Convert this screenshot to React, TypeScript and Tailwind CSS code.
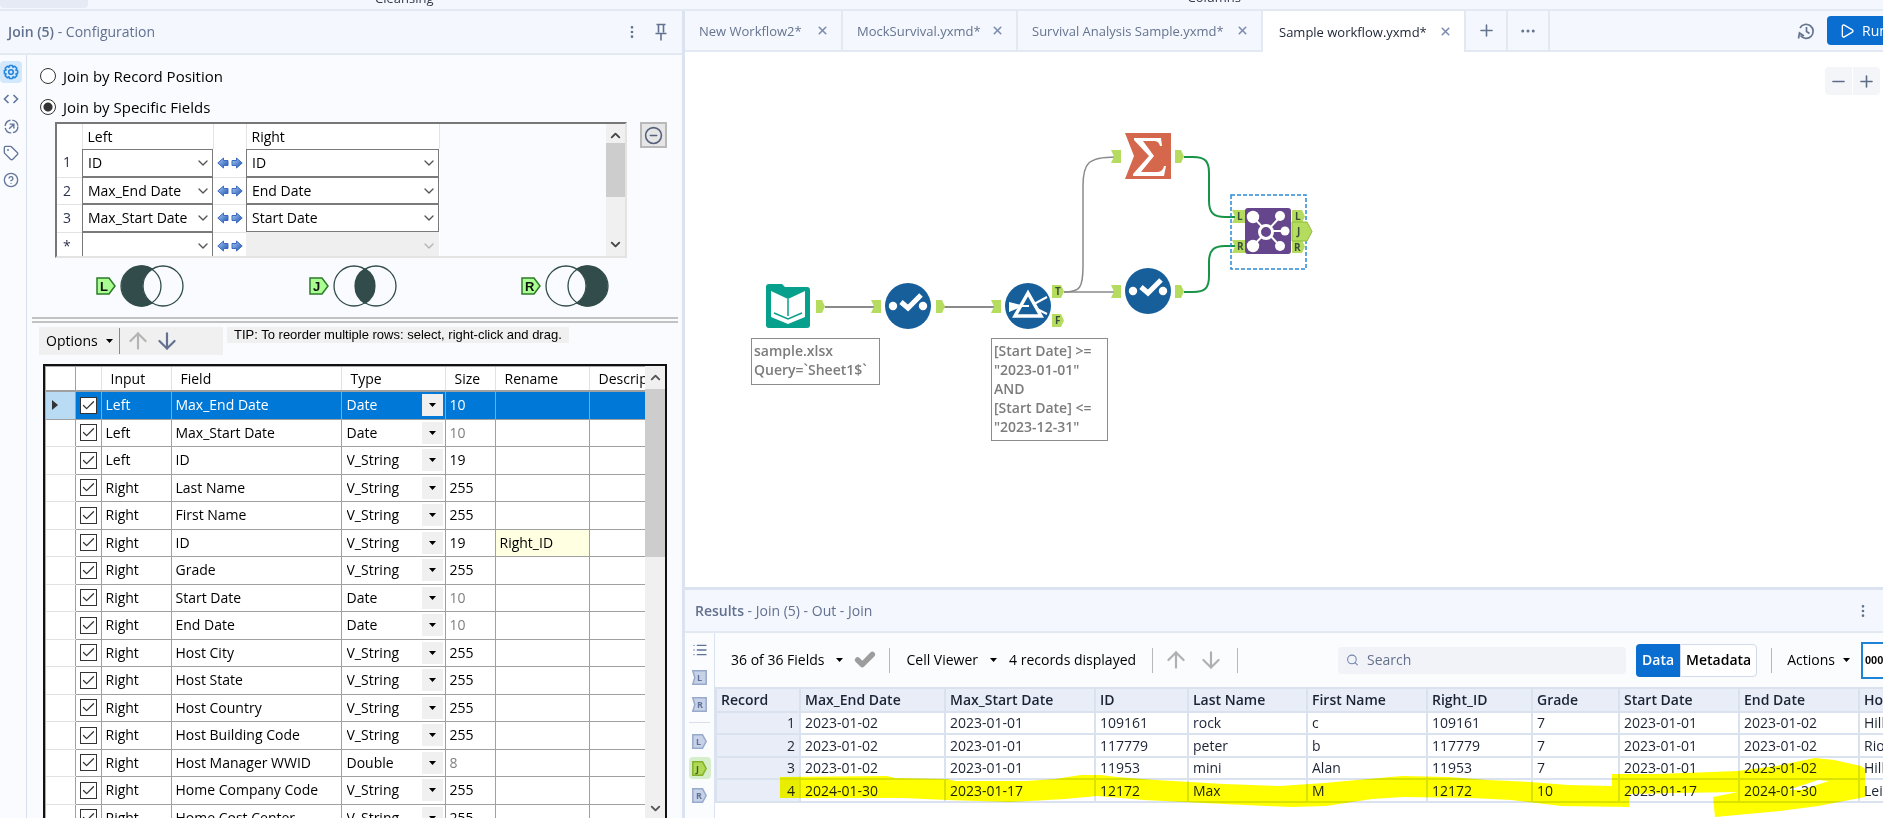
import React from 'react';
import {
  ArrowDown,
  ArrowUp,
  Check,
  ChevronDown,
  ChevronUp,
  CircleHelp,
  CircleMinus,
  EllipsisVertical,
  Ellipsis,
  List,
  Minus,
  Pin,
  Play,
  Plus,
  Search,
  Tag,
  X
} from 'lucide-react';

const joinRows = [
  { label: '1', left: 'ID', right: 'ID' },
  { label: '2', left: 'Max_End Date', right: 'End Date' },
  { label: '3', left: 'Max_Start Date', right: 'Start Date' },
  { label: '*', left: '', right: '' }
];

const fieldRows = [
  { input: 'Left', field: 'Max_End Date', type: 'Date', size: '10' },
  { input: 'Left', field: 'Max_Start Date', type: 'Date', size: '10' },
  { input: 'Left', field: 'ID', type: 'V_String', size: '19' },
  { input: 'Right', field: 'Last Name', type: 'V_String', size: '255' },
  { input: 'Right', field: 'First Name', type: 'V_String', size: '255' },
  { input: 'Right', field: 'ID', type: 'V_String', size: '19', rename: 'Right_ID' },
  { input: 'Right', field: 'Grade', type: 'V_String', size: '255' },
  { input: 'Right', field: 'Start Date', type: 'Date', size: '10' },
  { input: 'Right', field: 'End Date', type: 'Date', size: '10' },
  { input: 'Right', field: 'Host City', type: 'V_String', size: '255' },
  { input: 'Right', field: 'Host State', type: 'V_String', size: '255' },
  { input: 'Right', field: 'Host Country', type: 'V_String', size: '255' },
  { input: 'Right', field: 'Host Building Code', type: 'V_String', size: '255' },
  { input: 'Right', field: 'Host Manager WWID', type: 'Double', size: '8' },
  { input: 'Right', field: 'Home Company Code', type: 'V_String', size: '255' },
  { input: 'Right', field: 'Home Cost Center', type: 'V_String', size: '255' }
];

const tabs = [
  { name: 'New Workflow2*', width: 'w-[158px]' },
  { name: 'MockSurvival.yxmd*', width: 'w-[175px]' },
  { name: 'Survival Analysis Sample.yxmd*', width: 'w-[245px]' },
  { name: 'Sample workflow.yxmd*', width: 'w-[203px]', active: true }
];

const resultColumns = [
  'Record', 'Max_End Date', 'Max_Start Date', 'ID', 'Last Name', 'First Name',
  'Right_ID', 'Grade', 'Start Date', 'End Date', 'Host City'
];

const resultRows = [
  ['1', '2023-01-02', '2023-01-01', '109161', 'rock', 'c', '109161', '7', '2023-01-01', '2023-01-02', 'Hillsboro'],
  ['2', '2023-01-02', '2023-01-01', '117779', 'peter', 'b', '117779', '7', '2023-01-01', '2023-01-02', 'Rio Rancho'],
  ['3', '2023-01-02', '2023-01-01', '11953', 'mini', 'Alan', '11953', '7', '2023-01-01', '2023-01-02', 'Hillsboro'],
  ['4', '2024-01-30', '2023-01-17', '12172', 'Max', 'M', '12172', '10', '2023-01-17', '2024-01-30', 'Leixlip']
];

function Caret() {
  return (
    <svg viewBox="0 0 7 4" className="h-1 w-[7px] shrink-0" fill="currentColor" aria-hidden="true">
      <path d="M0 0h7L3.500 4z" />
    </svg>
  );
}

function SwapArrows() {
  return (
    <svg viewBox="0 0 26 12" className="mx-auto h-3 w-[26px]" aria-hidden="true">
      <defs>
        <linearGradient id="swap" x1="0" y1="0" x2="1" y2="1">
          <stop offset="0" stopColor="#a9cdf8" />
          <stop offset="1" stopColor="#1d4fae" />
        </linearGradient>
      </defs>
      <g fill="url(#swap)" stroke="#3c6cc0" strokeWidth="1">
        <path d="M.8 6l5.700-5v2.500h4.500v5H6.500V11z" />
        <path d="M25.200 6l-5.700-5v2.500h-4.500v5h4.500V11z" />
      </g>
    </svg>
  );
}

function TopStrip() {
  return (
    <div className="flex h-[11px] shrink-0 items-end overflow-hidden border-b-2 border-[#e3e9f3] bg-[#f4f7fd] text-[13px] leading-4 text-[#333a4a]">
      <div className="h-2 w-[88px] shrink-0 self-start rounded-b bg-[#e6eaf4]" />
      <span className="ml-[287px] pb-[3px]">Cleansing</span>
      <span className="ml-[754px] pb-1">Columns</span>
    </div>
  );
}

function SideRail() {
  const item = 'flex h-[22px] w-[22px] items-center justify-center rounded text-[#62759a]';
  return (
    <nav className="flex w-[27px] shrink-0 flex-col gap-[5px] border-r border-[#d9e1ef] pt-[6px]">
      <button className="flex h-[22px] w-[22px] items-center justify-center rounded bg-[#d3e8fc] text-[#2486dc]" aria-label="Configuration">
        <svg viewBox="0 0 16 16" className="h-4 w-4" fill="none" stroke="currentColor" strokeWidth="1.600" strokeLinejoin="round">
          <path d="M6.500 1.500h3l.5 1.700 1.800-.9 2 2-.9 1.800 1.700.5v2.800l-1.700.5.9 1.800-2 2-1.800-.9-.5 1.700h-3l-.5-1.700-1.800.9-2-2 .9-1.800-1.700-.5V6.600l1.700-.5-.9-1.800 2-2 1.800.9z" />
          <circle cx="8" cy="8" r="2.300" />
        </svg>
      </button>
      <button className={item} aria-label="XML view">
        <svg viewBox="0 0 16 16" className="h-4 w-4" fill="none" stroke="currentColor" strokeWidth="1.600">
          <path d="M5.500 4l-4 4 4 4M10.500 4l4 4-4 4" />
        </svg>
      </button>
      <button className={item} aria-label="Navigation">
        <svg viewBox="0 0 16 16" className="h-[15px] w-[15px]" fill="none" stroke="currentColor" strokeWidth="1.500">
          <circle cx="8" cy="8" r="6.800" strokeDasharray="8.700 2" />
          <path d="M5.500 10.500l5-5M6 5.500h4.500V10" />
        </svg>
      </button>
      <button className={item} aria-label="Annotation"><Tag size={16} /></button>
      <button className={item} aria-label="Help"><CircleHelp size={16} /></button>
    </nav>
  );
}

function JoinSelect({ value, disabled = false, name }: { value: string; disabled?: boolean; name: string }) {
  return (
    <div className="grid h-full w-full items-center">
      <select
        aria-label={name}
        disabled={disabled}
        defaultValue={value}
        className="col-start-1 row-start-1 h-full w-full appearance-none border border-[#7a7a7a] bg-white pl-[5px] text-black disabled:border-[#efefef] disabled:bg-[#efefef]">
        <option>{value}</option>
      </select>
      <ChevronDown
        size={16}
        strokeWidth={2}
        className={disabled ? 'pointer-events-none col-start-1 row-start-1 mr-[2px] justify-self-end text-[#b5b5b5]' : 'pointer-events-none col-start-1 row-start-1 mr-[2px] justify-self-end text-[#555]'} />
    </div>
  );
}

function JoinGrid() {
  return (
    <div className="flex h-[136px] w-[572px] overflow-hidden border-2 border-[#e3e3e3] border-t-[#777] border-l-[#777]">
      <div className="flex-1 overflow-hidden">
        <table className="w-[382px] table-fixed border-collapse bg-white">
          <colgroup>
            <col className="w-[25px]" />
            <col className="w-[131px]" />
            <col className="w-[33px]" />
            <col className="w-[193px]" />
          </colgroup>
          <thead>
            <tr className="h-[25px] text-left">
              <th />
              <th className="border-l border-[#e3e3e3] pl-[5px] font-normal">Left</th>
              <th className="border-l border-[#e3e3e3]" />
              <th className="border-x border-[#e3e3e3] pl-[5px] font-normal">Right</th>
            </tr>
          </thead>
          <tbody>
            {joinRows.map((row) => (
              <tr key={row.label} className="odd:h-7 even:h-[27px]">
                <td className="border-b border-[#e3e3e3] pl-[6px] pt-[3px] align-top text-[#2b3350]">{row.label}</td>
                <td className="h-px p-0"><JoinSelect value={row.left} name={`Left field ${row.label}`} /></td>
                <td className="border-b border-[#e3e3e3] p-0"><SwapArrows /></td>
                <td className="h-px p-0"><JoinSelect value={row.right} name={`Right field ${row.label}`} disabled={!row.right} /></td>
              </tr>
            ))}
          </tbody>
        </table>
      </div>
      <div className="flex w-[19px] flex-col items-center justify-between bg-[#f0f0f0] py-1 text-[#444]">
        <ChevronUp size={15} strokeWidth={3} />
        <div className="mb-auto h-[54px] w-full bg-[#cdcdcd]" />
        <ChevronDown size={15} strokeWidth={3} />
      </div>
    </div>
  );
}

function Venn({ kind }: { kind: 'L' | 'J' | 'R' }) {
  return (
    <div className="flex items-center gap-1">
      <svg viewBox="0 0 20 18" className="h-[18px] w-5">
        <path d="M1 1h12l6 8-6 8H1z" fill="#a9ff8f" stroke="#2c7a2c" strokeWidth="1.500" />
        <text x="4" y="14" className="font-[Liberation_Sans] text-[13px] font-bold" fill="#111">{kind}</text>
      </svg>
      <svg viewBox="0 0 64 42" className="h-[42px] w-16" stroke="#314c4b" strokeWidth="1.300" fill="none">
        {kind === 'L' && <path d="M32 3.700a20 20 0 1 0 0 34.600a20 20 0 0 1 0-34.600z" fill="#314c4b" />}
        {kind === 'J' && <path d="M32 3.700a20 20 0 0 1 0 34.600a20 20 0 0 1 0-34.600z" fill="#314c4b" />}
        {kind === 'R' && <path d="M32 3.700a20 20 0 1 1 0 34.600a20 20 0 0 0 0-34.600z" fill="#314c4b" />}
        <circle cx="21" cy="21" r="20" />
        <circle cx="43" cy="21" r="20" />
      </svg>
    </div>
  );
}

function FieldTable() {
  return (
    <div className="ml-4 mr-[15px] flex min-h-0 flex-1 overflow-hidden border-x-2 border-t-2 border-[#111] bg-white">
      <div className="min-w-0 flex-1 overflow-hidden border-l border-t border-[#aaa]">
        <table className="w-[640px] table-fixed border-collapse">
          <colgroup>
            <col className="w-[29px]" />
            <col className="w-[26px]" />
            <col className="w-[70px]" />
            <col className="w-[170px]" />
            <col className="w-[104px]" />
            <col className="w-[50px]" />
            <col className="w-[94px]" />
            <col className="w-[97px]" />
          </colgroup>
          <thead>
            <tr className="h-6 border-b-2 border-[#a0a0a0] text-left">
              <th className="border-r border-[#a0a0a0]" />
              <th className="border-r border-[#e2e2e2]" />
              {['Input', 'Field', 'Type', 'Size', 'Rename', 'Description'].map((name) => (
                <th key={name} className="border-r border-[#e2e2e2] pl-[9px] font-normal">{name}</th>
              ))}
            </tr>
          </thead>
          <tbody>
            {fieldRows.map((row, i) => {
              const selected = i === 0;
              const fixed = row.type !== 'V_String' && !selected;
              return (
                <tr key={i} className={selected ? 'h-7 bg-[#0078d7] text-white' : 'odd:h-7 even:h-[27px]'}>
                  <td className={selected ? 'border-b border-r border-[#a0a0a0] bg-[#b9dcf4] p-0' : 'border-b border-r border-b-[#e2e2e2] border-r-[#a0a0a0] p-0'}>
                    {selected && (
                      <svg viewBox="0 0 6 10" className="ml-[6px] h-[10px] w-[6px]" fill="#333"><path d="M0 0l6 5-6 5z" /></svg>
                    )}
                  </td>
                  <td className="border border-[#a0a0a0] p-0">
                    <label className="mx-auto grid h-[17px] w-[17px] place-items-center">
                      <input
                        type="checkbox"
                        defaultChecked
                        aria-label={`Include ${row.input} ${row.field}`}
                        className="col-start-1 row-start-1 h-[17px] w-[17px] appearance-none border border-[#333] bg-white" />
                      <Check size={15} strokeWidth={2} className="pointer-events-none col-start-1 row-start-1 text-[#333]" />
                    </label>
                  </td>
                  <td className="border border-[#a0a0a0] pl-1">{row.input}</td>
                  <td className="border border-[#a0a0a0] pl-1">{row.field}</td>
                  <td className="h-px border border-[#a0a0a0] p-0">
                    <div className="grid h-full grid-cols-[1fr_23px] items-center">
                      <select
                        aria-label={`Type of ${row.field}`}
                        defaultValue={row.type}
                        className="col-span-2 col-start-1 row-start-1 w-full appearance-none bg-transparent pl-[5px]">
                        <option>{row.type}</option>
                      </select>
                      <span className="pointer-events-none col-start-2 row-start-1 mr-[2px] flex h-[22px] items-center justify-center bg-[#f0f0f0] text-black">
                        <Caret />
                      </span>
                    </div>
                  </td>
                  <td className={fixed ? 'border border-[#a0a0a0] pl-1 text-[#808080]' : 'border border-[#a0a0a0] pl-1'}>{row.size}</td>
                  <td className={row.rename ? 'border border-[#a0a0a0] bg-[#ffffe1] pl-1' : 'border border-[#a0a0a0] pl-1'}>{row.rename}</td>
                  <td className="border border-[#a0a0a0]" />
                </tr>
              );
            })}
          </tbody>
        </table>
      </div>
      <div className="flex w-5 flex-col items-center bg-[#f0f0f0] text-[#555]">
        <ChevronUp size={15} strokeWidth={3} className="my-1" />
        <div className="h-[168px] w-full bg-[#cdcdcd]" />
        <ChevronDown size={15} strokeWidth={3} className="mt-auto mb-[2px]" />
      </div>
    </div>
  );
}

function ConfigPanel() {
  return (
    <aside className="flex w-[685px] shrink-0 flex-col border-r-[3px] border-[#dbe3f0] bg-[#fafbfe]">
      <header className="flex h-[44px] shrink-0 items-center border-b-2 border-[#e3e9f3] bg-[#f4f7fd] pl-2 pr-[14px] text-[#62718f]">
        <h2><b className="font-semibold">Join (5)</b> - Configuration</h2>
        <button className="ml-auto" aria-label="More"><EllipsisVertical size={16} /></button>
        <button className="ml-[14px]" aria-label="Pin">
          <svg viewBox="0 0 14 18" className="h-[18px] w-[14px]" fill="none" stroke="currentColor" strokeWidth="1.600">
            <path d="M2.500 1.500h9M4.500 1.500v8M9.500 1.500v8M1.500 10.500h11M7 10.500v7" />
          </svg>
        </button>
      </header>
      <div className="flex min-h-0 flex-1">
        <SideRail />
        <div className="flex min-w-0 flex-1 flex-col text-black">
          <div className="flex flex-col gap-[11px] pl-[13px] pt-[11px] text-[15px]">
            {['Join by Record Position', 'Join by Specific Fields'].map((name, i) => (
              <label key={name} className="flex h-5 items-center gap-[7px]">
                <input
                  type="radio"
                  name="join-by"
                  defaultChecked={i === 1}
                  className="h-4 w-4 appearance-none rounded-full border border-[#333] bg-white checked:bg-[radial-gradient(circle,#333_4px,#fff_5px)]" />
                {name}
              </label>
            ))}
          </div>
          <div className="mt-[5px] flex items-start gap-[13px] pl-7">
            <JoinGrid />
            <button className="flex h-[26px] w-[27px] items-center justify-center border-2 border-[#b9b9b9] bg-[#e6e6e6] text-[#55617d]" aria-label="Remove field">
              <CircleMinus size={19} strokeWidth={2} />
            </button>
          </div>
          <div className="mt-[7px] flex justify-between pl-[69px] pr-[73px]">
            <Venn kind="L" />
            <Venn kind="J" />
            <Venn kind="R" />
          </div>
          <div className="ml-[5px] mr-1 mt-[10px] h-[6px] shrink-0 border-y-2 border-[#c2c2c2]" />
          <div className="mt-1 flex gap-1 pl-3">
            <div className="flex h-7 w-[184px] items-center bg-[#f0f0f0] pl-[7px]">
              <button className="flex items-center gap-2">Options <Caret /></button>
              <span className="ml-[6px] h-[26px] w-px bg-[#888]" />
              <button className="ml-[5px] text-[#b4b4b4]" aria-label="Move up"><ArrowUp size={26} /></button>
              <button className="ml-[3px] text-[#62718f]" aria-label="Move down"><ArrowDown size={26} /></button>
            </div>
            <p className="h-4 bg-[#f0f0f0] px-[7px] font-['Liberation_Sans'] text-[13px] leading-4">
              TIP: To reorder multiple rows: select, right-click and drag.
            </p>
          </div>
          <div className="h-[9px] shrink-0" />
          <FieldTable />
        </div>
      </div>
    </aside>
  );
}

function TabBar() {
  return (
    <div className="flex h-[41px] shrink-0 bg-[#f4f7fd] text-[#65748f]">
      {tabs.map(({ name, width, active }) => (
        <div
          key={name}
          className={
            active
              ? `${width} flex shrink-0 items-center justify-between whitespace-nowrap border-r-2 border-[#e3e9f3] bg-white pl-4 pr-3 text-[13px] text-[#1c2434]`
              : `${width} flex shrink-0 items-center justify-between whitespace-nowrap border-b-2 border-r-2 border-[#e3e9f3] pl-[14px] pr-3 text-[13px]`
          }>
          <button>{name}</button>
          <button className="text-[#7d8db0]" aria-label={`Close ${name}`}><X size={13} strokeWidth={3} /></button>
        </div>
      ))}
      <button className="flex w-[42px] shrink-0 items-center justify-center border-b-2 border-r-2 border-[#e3e9f3]" aria-label="New tab">
        <Plus size={19} />
      </button>
      <button className="flex w-[42px] shrink-0 items-center justify-center border-b-2 border-r-2 border-[#e3e9f3]" aria-label="More tabs">
        <Ellipsis size={18} />
      </button>
      <div className="flex flex-1 items-center justify-end gap-3 border-b-2 border-[#e3e9f3]">
        <button aria-label="History">
          <svg viewBox="0 0 18 18" className="h-[18px] w-[18px]" fill="none" stroke="currentColor" strokeWidth="1.700">
            <path d="M3 6a7 7 0 1 1 .5 7.500M9.500 5v4.500l3 2" />
            <path d="M1.500 16.500L2.500 11l4.500 3" />
          </svg>
        </button>
        <button className="flex h-[29px] w-14 items-center gap-[7px] overflow-hidden rounded-l bg-[#0a6ed1] pl-3 text-white">
          <Play size={16} className="shrink-0" />
          Run
        </button>
      </div>
    </div>
  );
}

// Input anchors have a notch on the left, output anchors a point on the right
function AnchorIn({ x, y }: { x: number; y: number }) {
  return <path d={`M${x} ${y}h10v13h-10l3-6.500z`} fill="#b5dc5f" />;
}

function AnchorOut({ x, y, w = 9, h = 13 }: { x: number; y: number; w?: number; h?: number }) {
  return <path d={`M${x} ${y}h${w - 3}l3 ${h / 2}l-3 ${h / 2}h-${w - 3}z`} fill="#b5dc5f" />;
}

function SelectTool({ x, y }: { x: number; y: number }) {
  return (
    <g transform={`translate(${x} ${y})`}>
      <circle r="23" fill="#175f9b" />
      <g fill="#fff">
        <circle cx="-15" r="4.200" />
        <circle cx="15" r="4.200" />
      </g>
      <path d="M-7-4L0 2L13-11" fill="none" stroke="#fff" strokeWidth="5" />
    </g>
  );
}

function AnchorLabel({ x, y, children }: { x: number; y: number; children: string }) {
  return <text x={x} y={y} fill="#3a4f3a" className="text-[10px] font-bold">{children}</text>;
}

function Canvas() {
  const note = 'absolute border border-[#8c8c8c] bg-white pl-[2px] pt-[2px] text-[14px] leading-[19px] font-semibold text-[#7c7c7c]';
  return (
    <div className="relative min-h-0 flex-1 overflow-hidden bg-white">
      <svg viewBox="0 0 660 420" className="absolute left-0 top-0 h-[420px] w-[660px]">
        <g fill="none" stroke="#8a8a8a" strokeWidth="1.500">
          <path d="M140 255h52M259 255h53" strokeWidth="2" />
          <path d="M379 240h52" />
          <path d="M379 240c16 0 19-4 19-26V134c0-22 4-29 33-29" />
          <path d="M499 105h9c12 0 16 4 16 16v28c0 12 5 16 16 16h12" stroke="#179447" strokeWidth="2" />
          <path d="M499 240h9c12 0 16-4 16-16v-14c0-12 5-16 16-16h12" stroke="#179447" strokeWidth="2" />
        </g>

        {/* Input Data */}
        <path d="M81 235a3 3 0 0 1 3-3h13l3 3h22a3 3 0 0 1 3 3v35a3 3 0 0 1-3 3H84a3 3 0 0 1-3-3z" fill="#07a08c" />
        <path d="M86 239l17 8 17-8v26l-17 7-17-7z" fill="#fff" />
        <path d="M103 247v17M89 261l14 6 14-6" fill="none" stroke="#07a08c" strokeWidth="1.500" />
        <AnchorOut x={131} y={248} />

        <AnchorIn x={186} y={248} />
        <SelectTool x={223} y={254} />
        <AnchorOut x={251} y={248} />

        {/* Filter */}
        <AnchorIn x={306} y={248} />
        <circle cx="343" cy="254" r="23" fill="#175f9b" />
        <path d="M324 250l12 3v2l-12 5z" fill="#fff" />
        <path d="M343 241l13 23h-26z" fill="none" stroke="#fff" strokeWidth="3.500" />
        <path d="M349 252l13-7M352 257l10 5M336 254h8" stroke="#fff" strokeWidth="2" />
        <AnchorOut x={367} y={233} w={12} />
        <AnchorOut x={367} y={262} w={12} />
        <AnchorLabel x={370} y={243}>T</AnchorLabel>
        <AnchorLabel x={370} y={272}>F</AnchorLabel>

        {/* Summarize */}
        <AnchorIn x={426} y={98} />
        <path d="M440 81h46v46h-46l9-23z" fill="#d4674c" />
        <path d="M449 86h27l1 8h-2c-1-4-3-5-7-5h-10l11 15-13 16h15c5 0 7-2 8-6h2l-2 10h-31v-2l16-18-15-16z" fill="#fff" />
        <AnchorOut x={490} y={98} />

        <AnchorIn x={426} y={233} />
        <SelectTool x={463} y={239} />
        <AnchorOut x={490} y={233} />

        {/* Join, currently selected */}
        <rect x="546" y="143" width="75" height="74" fill="none" stroke="#2b8ad6" strokeWidth="1.500" strokeDasharray="4 2" />
        <path d="M547 158h13v13h-13l3-6.500zM547 188h13v13h-13l3-6.500z" fill="#b5dc5f" />
        <path d="M546 165h4M546 194h4" stroke="#179447" strokeWidth="2" />
        <rect x="560" y="156" width="46" height="46" rx="3" fill="#65468d" />
        <g stroke="#fff" strokeWidth="2">
          <path d="M568 165l27 29M568 194l27-29M581 179h18" />
          <circle cx="581" cy="180" r="6.500" fill="#65468d" strokeWidth="3" />
        </g>
        <g fill="#fff">
          <circle cx="568" cy="165" r="6.200" />
          <circle cx="568" cy="194" r="6.200" />
          <circle cx="595" cy="164" r="5" />
          <circle cx="595" cy="194" r="5" />
          <circle cx="600" cy="179" r="4.500" />
        </g>
        <AnchorOut x={607} y={158} w={13} />
        <AnchorOut x={607} y={188} w={13} />
        <path d="M607 170h15l5 9.500-5 9.500h-15z" fill="#b5dc5f" stroke="#8dbb3c" />
        <AnchorLabel x={552} y={168}>L</AnchorLabel>
        <AnchorLabel x={552} y={198}>R</AnchorLabel>
        <AnchorLabel x={610} y={168}>L</AnchorLabel>
        <AnchorLabel x={612} y={183}>J</AnchorLabel>
        <AnchorLabel x={609} y={199}>R</AnchorLabel>
      </svg>
      <div className={`${note} left-[66px] top-[286px] h-[47px] w-[129px]`}>
        sample.xlsx<br />Query=`Sheet1$`
      </div>
      <div className={`${note} left-[306px] top-[286px] h-[103px] w-[117px]`}>
        [Start Date] &gt;=<br />"2023-01-01"<br />AND<br />[Start Date] &lt;=<br />"2023-12-31"
      </div>
      <div className="absolute right-[3px] top-[15px] flex gap-px text-[#5e6c87]">
        <button className="flex h-7 w-[27px] items-center justify-center rounded-l bg-[#f3f5f9]" aria-label="Zoom out"><Minus size={19} /></button>
        <button className="flex h-7 w-[27px] items-center justify-center rounded-r bg-[#f3f5f9]" aria-label="Zoom in"><Plus size={19} /></button>
      </div>
    </div>
  );
}

function RailAnchor({ letter, input = false, active = false }: { letter: string; input?: boolean; active?: boolean }) {
  return (
    <button
      aria-label={`${input ? 'Input' : 'Output'} ${letter}`}
      className={active ? 'flex h-[22px] w-[22px] shrink-0 items-center justify-center rounded bg-[#d6eecb]' : 'flex h-[22px] w-[22px] shrink-0 items-center justify-center rounded'}>
      <svg viewBox="0 0 15 15" className="h-[15px] w-[15px]">
        <path
          d={input ? 'M.8.8h13.400v13.400H.8l2-6.700z' : 'M.8.8h9.700l3.700 6.700-3.700 6.700H.8z'}
          fill={active ? '#b0d957' : '#c7d2e8'}
          stroke={active ? '#86b02c' : '#98a9cb'}
          strokeWidth="1.500" />
        <text x={input ? 5 : 4} y="11" fill={active ? '#3f5a2a' : '#5f7197'} className="text-[9px] font-bold">{letter}</text>
      </svg>
    </button>
  );
}

function ResultsToolbar() {
  const divider = 'h-[25px] w-px shrink-0 bg-[#b8b8b8]';
  return (
    <div className="flex h-[54px] shrink-0 items-center whitespace-nowrap bg-[#fbfcfe] pl-4 text-black">
      <button className="flex items-center gap-3">36 of 36 Fields <Caret /></button>
      <button className="ml-[11px] text-[#9d9d9d]" aria-label="Apply"><Check size={22} strokeWidth={6} /></button>
      <span className={`ml-[13px] ${divider}`} />
      <button className="ml-4 flex items-center gap-3">Cell Viewer <Caret /></button>
      <span className="ml-3">4 records displayed</span>
      <span className={`ml-4 ${divider}`} />
      <button className="ml-[10px] text-[#b0b0b0]" aria-label="Previous"><ArrowUp size={26} /></button>
      <button className="ml-[9px] text-[#b0b0b0]" aria-label="Next"><ArrowDown size={26} /></button>
      <span className={`ml-[13px] ${divider}`} />
      <label className="ml-auto flex h-[27px] w-[288px] items-center gap-2 rounded bg-[#f1f3f9] pl-2 text-[#7486ad]">
        <Search size={14} />
        <input type="search" placeholder="Search" aria-label="Search" className="w-full bg-transparent placeholder:text-[#65718a]" />
      </label>
      <div className="ml-[10px] flex h-[33px] font-semibold">
        <button className="rounded-l bg-[#0a6ed1] px-[6px] text-white">Data</button>
        <button className="rounded-r border border-[#d3daec] bg-white px-[5px]">Metadata</button>
      </div>
      <span className={`ml-[14px] ${divider}`} />
      <button className="ml-[15px] flex items-center gap-2">Actions <Caret /></button>
      <button className="ml-[11px] h-[37px] w-[22px] shrink-0 overflow-hidden border-y-2 border-l-2 border-[#1f84d6] bg-white pl-[2px] text-left font-['Liberation_Sans'] text-[11px] font-bold">
        000
      </button>
    </div>
  );
}

function ResultsTable() {
  return (
    <div className="relative min-h-0 flex-1 overflow-hidden bg-white">
      <table className="w-[1223px] table-fixed border-collapse text-[#1c2434]">
        <colgroup>
          <col className="w-[84px]" />
          <col className="w-[145px]" />
          <col className="w-[150px]" />
          <col className="w-[93px]" />
          <col className="w-[119px]" />
          <col className="w-[120px]" />
          <col className="w-[105px]" />
          <col className="w-[87px]" />
          <col className="w-[120px]" />
          <col className="w-[120px]" />
          <col className="w-20" />
        </colgroup>
        <thead>
          <tr className="h-6 bg-[#e9edf8] text-left">
            {resultColumns.map((name) => (
              <th key={name} className="whitespace-nowrap border-2 border-[#dae2f0] p-0 pl-1 font-semibold leading-5">{name}</th>
            ))}
          </tr>
        </thead>
        <tbody>
          {resultRows.map((row) => (
            <tr key={row[0]} className="odd:h-[22px] even:h-[23px]">
              {row.map((cell, i) => (
                <td
                  key={i}
                  className={
                    i === 0
                      ? 'border-2 border-[#dae2f0] bg-[#e9edf8] p-0 pr-1 text-right leading-5'
                      : 'whitespace-nowrap border-2 border-[#dae2f0] p-0 pl-1 leading-5'
                  }>
                  {cell}
                </td>
              ))}
            </tr>
          ))}
        </tbody>
      </table>
      {/* Marker stroke over the last record */}
      <svg viewBox="0 0 1168 130" className="pointer-events-none absolute left-0 top-0 h-[130px] w-[1168px] mix-blend-multiply" fill="#ffff00">
        <path
          fillRule="evenodd"
          d="M65 90L172 89L180 91L232 92L240 94L311 94L340 92L366 88L386 88L402 90L441 93L475 95L509 97L565 99L609 96L642 93L687 89L734 90L773 93L815 95L853 98L897 99V87L942 87L1023 84L1061 79L1100 71L1119 73L1146 79L1150 82V110L1103 119L1065 124L1000 130L998 110L1023 105L960 106L914 107V120L846 119L796 113L757 111L688 110L657 112L611 119L575 120L509 117L429 113L382 109L350 112L295 115L232 113L188 111H65z
             M1073 103L1103 93L1114 94L1086 103z" />
      </svg>
    </div>
  );
}

function ResultsPanel() {
  return (
    <section className="flex h-[231px] shrink-0 flex-col border-t-[3px] border-[#dbe3f0]">
      <header className="flex h-[43px] shrink-0 items-center border-b-2 border-[#e3e9f3] bg-[#f4f7fd] pl-[10px] pr-3 text-[#62718f]">
        <h2><b className="font-semibold">Results</b> - Join (5) - Out - Join</h2>
        <button className="ml-auto" aria-label="More"><EllipsisVertical size={16} /></button>
      </header>
      <div className="flex min-h-0 flex-1">
        <nav className="flex w-[30px] shrink-0 flex-col items-center gap-[5px] border-r border-[#dbe3f0] bg-[#fbfcfe] pt-[6px] text-[#5f7197]">
          <button className="flex h-[22px] shrink-0 items-center" aria-label="Messages"><List size={16} /></button>
          <RailAnchor letter="L" input />
          <RailAnchor letter="R" input />
          <span className="my-[2px] h-px w-[21px] shrink-0 bg-[#d9dfea]" />
          <RailAnchor letter="L" />
          <RailAnchor letter="J" active />
          <RailAnchor letter="R" />
        </nav>
        <div className="flex min-w-0 flex-1 flex-col">
          <ResultsToolbar />
          <ResultsTable />
        </div>
      </div>
    </section>
  );
}

export default function App() {
  return (
    <div className="flex h-screen flex-col overflow-hidden bg-white font-['Open_Sans','Noto_Sans',sans-serif] text-[14px] leading-5">
      <TopStrip />
      <div className="flex min-h-0 flex-1">
        <ConfigPanel />
        <main className="flex min-w-0 flex-1 flex-col">
          <TabBar />
          <Canvas />
          <ResultsPanel />
        </main>
      </div>
    </div>
  );
}
